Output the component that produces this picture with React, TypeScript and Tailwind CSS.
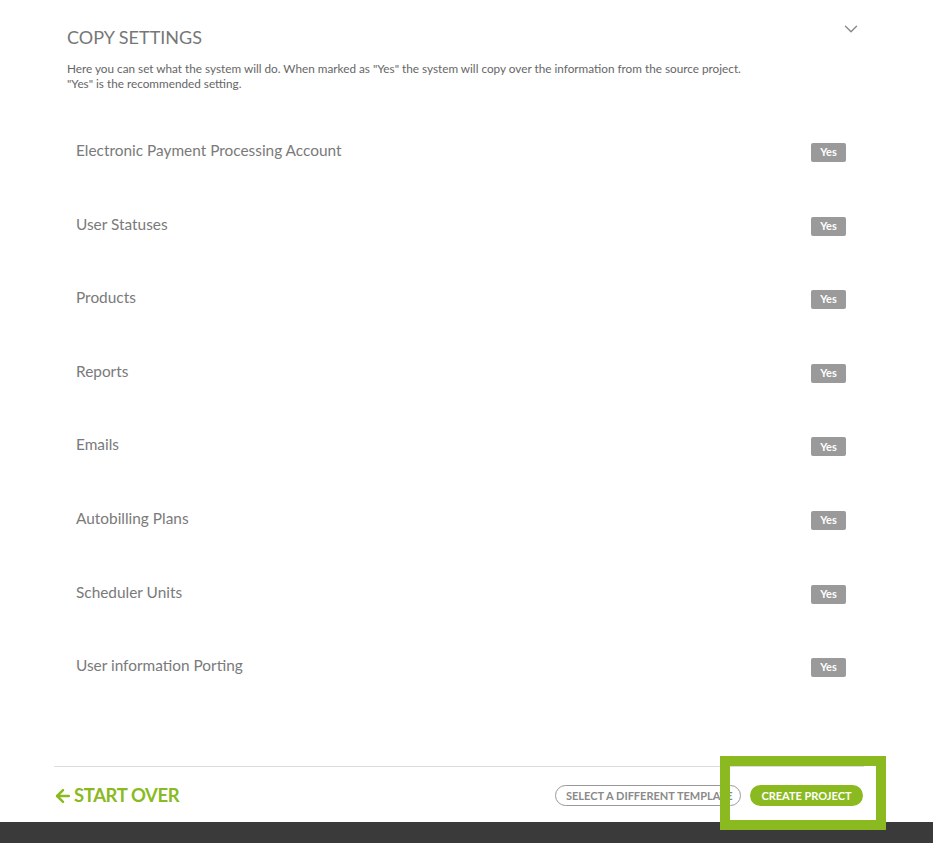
import { ArrowLeft, ChevronDown } from "lucide-react";

const SETTINGS = [
  "Electronic Payment Processing Account",
  "User Statuses",
  "Products",
  "Reports",
  "Emails",
  "Autobilling Plans",
  "Scheduler Units",
  "User information Porting",
];

function SettingRow({ label }: { label: string }) {
  return (
    <div className="h-[73.6px] flex items-start justify-between pl-[22px] pr-[18px]">
      <span className="text-[15.4px] leading-[20px] text-[#7a7a7a]">{label}</span>
      <span className="mt-[3px] w-[35px] h-[19px] rounded-[2px] bg-[#9a9a9a] text-white text-[11px] font-bold flex items-center justify-center">
        Yes
      </span>
    </div>
  );
}

export default function App() {
  return (
    <div className="min-h-[843px] w-full bg-white font-['Lato','Open_Sans',sans-serif] flex flex-col">
      <main className="flex-1 w-[810px] ml-[54px]">
        <section className="pt-[26px] pl-[13px] pr-[2px]">
          <div className="flex items-start justify-between">
            <h2 className="text-[18px] leading-[22px] text-[#777] uppercase">
              Copy Settings
            </h2>
            <ChevronDown
              className="w-[22px] h-[22px] text-[#888] -mt-[8px]"
              strokeWidth={1.5}
            />
          </div>
          <p className="mt-[13px] text-[11.75px] leading-[15px] text-[#666]">
            Here you can set what the system will do. When marked as "Yes" the
            system will copy over the information from the source project.
            <br />
            "Yes" is the recommended setting.
          </p>
        </section>

        <section className="mt-[49px]">
          {SETTINGS.map((s) => (
            <SettingRow key={s} label={s} />
          ))}
        </section>

        <div className="mt-[37px] border-t border-[#dcdcdc]" />

        <div className="relative h-[55px] flex items-center justify-between pr-[1px]">
          <button
            type="button"
            className="flex items-center gap-[1px] text-[#8aba1f] text-[18.5px] font-bold tracking-[-0.4px] mt-[3px] -ml-[1px]"
          >
            <ArrowLeft className="w-[20px] h-[20px]" strokeWidth={3} />
            START OVER
          </button>
          <div className="flex items-center gap-[9px] mt-[3px]">
            <button
              type="button"
              className="w-[186px] h-[21px] rounded-full border border-[#999] text-[#8a8a8a] text-[11px] font-bold whitespace-nowrap overflow-hidden pl-[10px] text-left"
            >
              SELECT A DIFFERENT TEMPLATE
            </button>
            <button
              type="button"
              className="w-[113px] h-[21px] rounded-full bg-[#8aba1f] text-white text-[11px] font-bold whitespace-nowrap"
            >
              CREATE PROJECT
            </button>
          </div>
        </div>
      </main>

      <footer className="h-[22px] bg-[#3a3a3a]" />

      <div className="absolute left-[720px] top-[756px] w-[166px] h-[74px] border-[10px] border-[#8aba1f] pointer-events-none" />
    </div>
  );
}
